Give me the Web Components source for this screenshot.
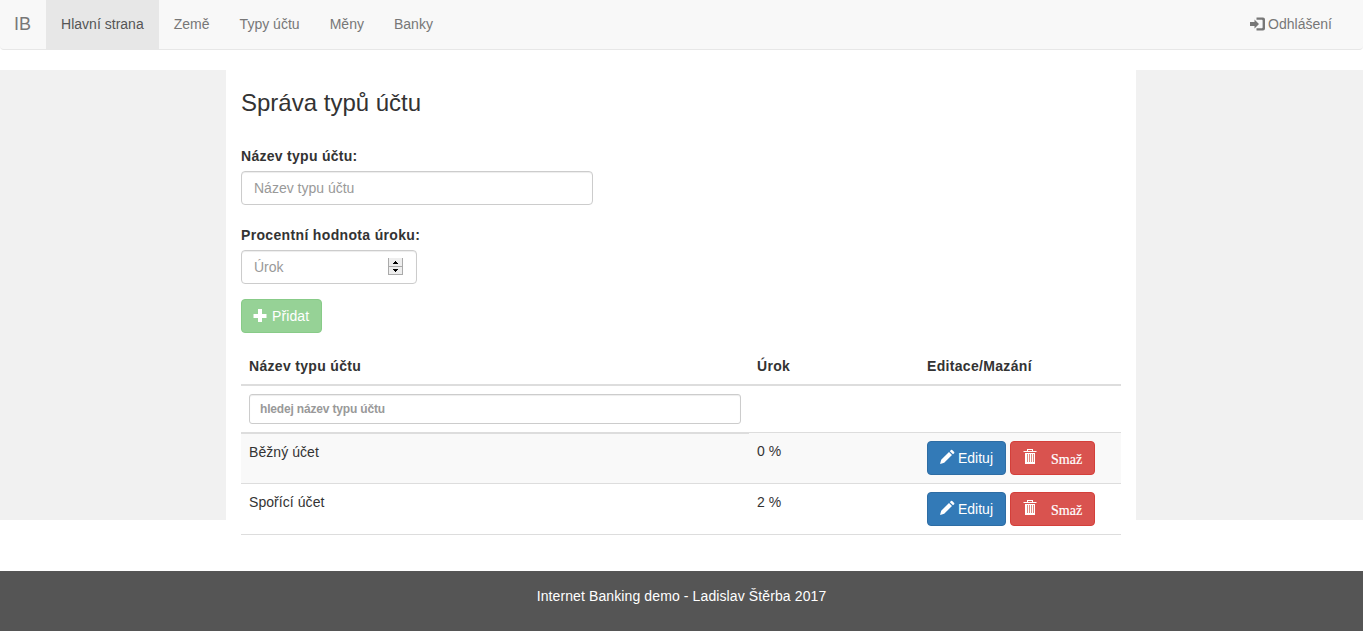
<!DOCTYPE html>
<html lang="cs">
<head>
<meta charset="utf-8">
<title>Internet Banking</title>
<style>
html,body{margin:0;height:100%}
body{font:14px/20px "Liberation Sans",Arial,sans-serif;color:#333;background:#fff;overflow:hidden}
</style>
</head>
<body>
<ib-app></ib-app>
<script>
const define = (name, html) => {
  const t = document.createElement('template');
  t.innerHTML = '<style>*{box-sizing:border-box}</style>' + html;
  customElements.define(name, class extends HTMLElement {
    constructor() {
      super();
      this.attachShadow({mode: 'open'}).append(t.content.cloneNode(true));
    }
  });
};

const icons = {
  login: '<path d="M0 5h4.500V2.500L9 7l-4.500 4.500V9H0z"/><path d="M6.500.5H13q2 0 2 2v9q0 2-2 2H6.500v-2.300h5.300q.8 0 .8-.8V3.600q0-.8-.8-.8H6.500z"/>',
  plus: '<path d="M5 0h4v5h4.500v4H9v4H5V9H.5V5H5z"/>',
  pencil: '<path d="M0 14l1.200-4.200L9 2l3 3-7.800 7.800zM9.800 1.200L11 0q.6-.3 1.200 0L14.200 2q.4.6 0 1.200L13 4.300z"/>',
  trash: '<path d="M4 2V0h6v2h3.500v1H.5V2zm1 0h4V1H5zM2 4h10v11H2z"/><path d="M4.500 5v8M6.500 5v8M8.500 5v8M10.500 5v8" stroke="#e08a80" stroke-width="1"/>'
};
customElements.define('ib-icon', class extends HTMLElement {
  connectedCallback() {
    if (this.shadowRoot) return;
    this.attachShadow({mode: 'open'}).innerHTML =
      `<style>:host{display:inline-block;width:15px;height:14px;flex:none}svg{display:block;overflow:visible}</style>
       <svg width="15" height="14" viewBox="0 0 15 14" fill="currentColor">${icons[this.getAttribute('name')]}</svg>`;
  }
});

define('ib-nav-item', `<style>
:host{display:block;padding:14px 15px 15px;color:#777;white-space:nowrap}
:host([active]){background:#e7e7e7;color:#555}
:host([brand]){font-size:18px;padding-left:14px}
:host([end]){margin-left:auto;padding-right:31px;display:flex}
</style><slot></slot>`);

define('ib-navbar', `<style>
:host{display:flex;height:50px;background:#f8f8f8;border-bottom:1px solid #e7e7e7;border-radius:0 0 4px 4px;letter-spacing:.015px}
ib-icon{margin:3px 3px 0 0}
</style>
<ib-nav-item brand>IB</ib-nav-item><ib-nav-item active>Hlavní strana</ib-nav-item><ib-nav-item>Země</ib-nav-item><ib-nav-item>Typy účtu</ib-nav-item><ib-nav-item>Měny</ib-nav-item><ib-nav-item>Banky</ib-nav-item><ib-nav-item end><ib-icon name="login"></ib-icon>Odhlášení</ib-nav-item>`);

define('ib-button', `<style>
:host{display:inline-flex;height:34px;padding:6px 12px;border:1px solid;border-radius:4px;color:#fff;white-space:nowrap;box-sizing:border-box}
:host([kind=add]){width:81px;background:#96d296;border-color:#88cb88;padding-left:11px}
:host([kind=add]) span{margin-left:4px;letter-spacing:.1px}
:host([kind=edit]){width:79px;background:#337ab7;border-color:#2e6da4;padding-left:12px}
:host([kind=delete]){width:85px;background:#d9534f;border-color:#d43f3a;font-family:"Liberation Serif",serif;-webkit-text-stroke:.2px #fff}
span{line-height:20px;margin-left:3px}
:host([kind=delete]) span{margin:2px 0 0 13px}
</style><slot name="icon"></slot><span><slot></slot></span>`);

define('ib-input', `<style>
:host{display:block;height:34px;border:1px solid #ccc;border-radius:4px;padding:6px 12px;color:#999;background:#fff;box-shadow:inset 0 1px 1px rgba(0,0,0,.075);box-sizing:border-box}
:host([small]){height:30px;padding:4px 10px;font-size:12px;font-weight:bold;border-radius:3px;letter-spacing:-.17px}
:host([number]){display:flex;justify-content:space-between;width:176px}
svg{display:none}
:host([number]) svg{display:block;margin:1px 1px 0 0}
</style><slot></slot>
<svg width="15" height="17" viewBox="0 0 15 17" shape-rendering="crispEdges"><path fill="#eee" d="M0 0h15v17H0z"/><path fill="#aaa" d="M0 0h1v17H0zM14 0h1v17h-1zM0 8h15v1H0zM0 16h15v1H0z"/><path d="M7 3h1v1h1v1h1v1H5V5h1V4h1zM5 11h5v1H9v1H8v1H7v-1H6v-1H5z"/></svg>`);

define('ib-form', `<style>
:host{display:block}
h1{font-size:24px;line-height:26px;font-weight:normal;margin:0 0 30px}
label{display:block;font-weight:bold;height:25px;letter-spacing:.28px}
label + ib-input + label{letter-spacing:.34px}
.wide{width:352px;margin-bottom:20px}
.num{margin-bottom:15px}
</style>
<h1>Správa typů účtu</h1>
<label>Název typu účtu:</label><ib-input class="wide">Název typu účtu</ib-input>
<label>Procentní hodnota úroku:</label><ib-input class="num" number>Úrok</ib-input>
<ib-button kind="add"><ib-icon slot="icon" name="plus" style="margin-top:3px"></ib-icon>Přidat</ib-button>`);

define('ib-row', `<style>
:host{display:grid;grid-template-columns:508px 170px 202px;height:51px;border-bottom:1px solid #ddd;box-sizing:border-box}
:host([striped]){background:#f9f9f9}
div{padding:8px}
.n{letter-spacing:.06px}
.a{display:flex;gap:4px}
:host([striped]) .n{padding-top:9px}
ib-icon{margin-top:2px}
</style><div class="n"><slot name="name"></slot></div><div><slot name="rate"></slot></div>
<div class="a"><ib-button kind="edit"><ib-icon slot="icon" name="pencil"></ib-icon>Edituj</ib-button><ib-button kind="delete"><ib-icon slot="icon" name="trash" style="margin-top:1px"></ib-icon>Smaž</ib-button></div>`);

define('ib-table', `<style>
:host{display:block}
.h,.f{display:grid;grid-template-columns:508px 170px 202px}
.h{font-weight:bold;border-bottom:2px solid #ddd;height:39px;letter-spacing:.32px}
.h div{padding:9px 8px 8px}
.f{height:47px;border-bottom:1px solid #ddd}
.f div{height:48px;padding:8px;border-bottom:2px solid #ddd;position:relative;z-index:1}
</style>
<div class="h"><div>Název typu účtu</div><div>Úrok</div><div>Editace/Mazání</div></div>
<div class="f"><div><ib-input small>hledej název typu účtu</ib-input></div></div>
<ib-row striped><span slot="name">Běžný účet</span><span slot="rate">0 %</span></ib-row>
<ib-row><span slot="name">Spořící účet</span><span slot="rate">2 %</span></ib-row>`);

define('ib-footer', `<style>
:host{display:block;height:60px;padding-top:15px;background:#555;color:#fff;text-align:center;box-sizing:border-box;letter-spacing:.11px}
</style><slot></slot>`);

define('ib-app', `<style>
:host{display:flex;flex-direction:column;height:631px}
main{flex:1;display:grid;grid-template-columns:226px 910px 227px;padding-top:20px;align-items:start}
aside{height:450px;background:#f1f1f1}
section{padding:20px 15px 0}
ib-table{margin-top:14px}
</style>
<ib-navbar></ib-navbar>
<main><aside></aside><section><ib-form></ib-form><ib-table></ib-table></section><aside></aside></main>
<ib-footer>Internet Banking demo - Ladislav Štěrba 2017</ib-footer>`);
</script>
</body>
</html>
